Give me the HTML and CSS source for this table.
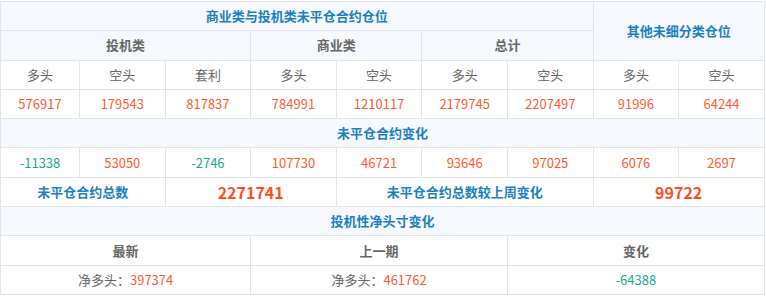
FILE: index.html
```html
<!DOCTYPE html>
<html lang="zh-CN">
<head>
<meta charset="utf-8">
<link rel="stylesheet" href="styles.css">
</head>
<body>
<table class="pos">
  <colgroup>
    <col class="c1"><col class="c"><col class="c"><col class="c"><col class="c"><col class="c"><col class="c"><col class="c"><col class="c">
  </colgroup>
  <tr class="hd">
    <td colspan="7" class="title">商业类与投机类未平仓合约仓位</td>
    <td colspan="2" rowspan="2" class="title">其他未细分类仓位</td>
  </tr>
  <tr class="hd">
    <td colspan="3" class="sub">投机类</td>
    <td colspan="2" class="sub">商业类</td>
    <td colspan="2" class="sub">总计</td>
  </tr>
  <tr>
    <td class="lbl">多头</td><td class="lbl">空头</td><td class="lbl">套利</td><td class="lbl">多头</td><td class="lbl">空头</td><td class="lbl">多头</td><td class="lbl">空头</td><td class="lbl">多头</td><td class="lbl">空头</td>
  </tr>
  <tr>
    <td class="up">576917</td><td class="up">179543</td><td class="up">817837</td><td class="up">784991</td><td class="up">1210117</td><td class="up">2179745</td><td class="up">2207497</td><td class="up">91996</td><td class="up">64244</td>
  </tr>
  <tr class="hd">
    <td colspan="9" class="title">未平仓合约变化</td>
  </tr>
  <tr>
    <td class="down">-11338</td><td class="up">53050</td><td class="down">-2746</td><td class="up">107730</td><td class="up">46721</td><td class="up">93646</td><td class="up">97025</td><td class="up">6076</td><td class="up">2697</td>
  </tr>
  <tr>
    <td colspan="2" class="title">未平仓合约总数</td>
    <td colspan="2" class="big">2271741</td>
    <td colspan="3" class="title">未平仓合约总数较上周变化</td>
    <td colspan="2" class="big">99722</td>
  </tr>
  <tr class="hd">
    <td colspan="9" class="title">投机性净头寸变化</td>
  </tr>
  <tr>
    <td colspan="3" class="sub">最新</td>
    <td colspan="3" class="sub">上一期</td>
    <td colspan="3" class="sub">变化</td>
  </tr>
  <tr>
    <td colspan="3" class="lbl">净多头：<span class="up">397374</span></td>
    <td colspan="3" class="lbl">净多头：<span class="up">461762</span></td>
    <td colspan="3" class="down">-64388</td>
  </tr>
</table>
</body>
</html>
```

FILE: styles.css
```css
html, body {
  margin: 0;
  padding: 0;
  background: #ffffff;
}
body {
  padding-top: 1px;
  font-family: "Noto Sans CJK SC", "Noto Sans", sans-serif;
  font-size: 13px;
}
.pos {
  border-collapse: collapse;
  table-layout: fixed;
  width: 764px;
}
.c1 { width: 79px; }
.c { width: 85.6px; }
.pos td {
  border: 1px solid #e1e4e9;
  text-align: center;
  vertical-align: middle;
  height: 28.3px;
  padding: 0;
  line-height: 16px;
  white-space: nowrap;
  color: #666666;
}
.pos tr.hd td { background: #f5f8fc; }
.pos td.title {
  color: #1b7fc0;
  font-weight: bold;
}
.pos td.sub {
  color: #666666;
  font-weight: bold;
}
.pos td.lbl { color: #666666; }
.pos .up { color: #ff5b2e; }
.pos .down { color: #1aa98a; }
.pos td.big {
  color: #ff4f1f;
  font-weight: bold;
  font-size: 16px;
}
```
